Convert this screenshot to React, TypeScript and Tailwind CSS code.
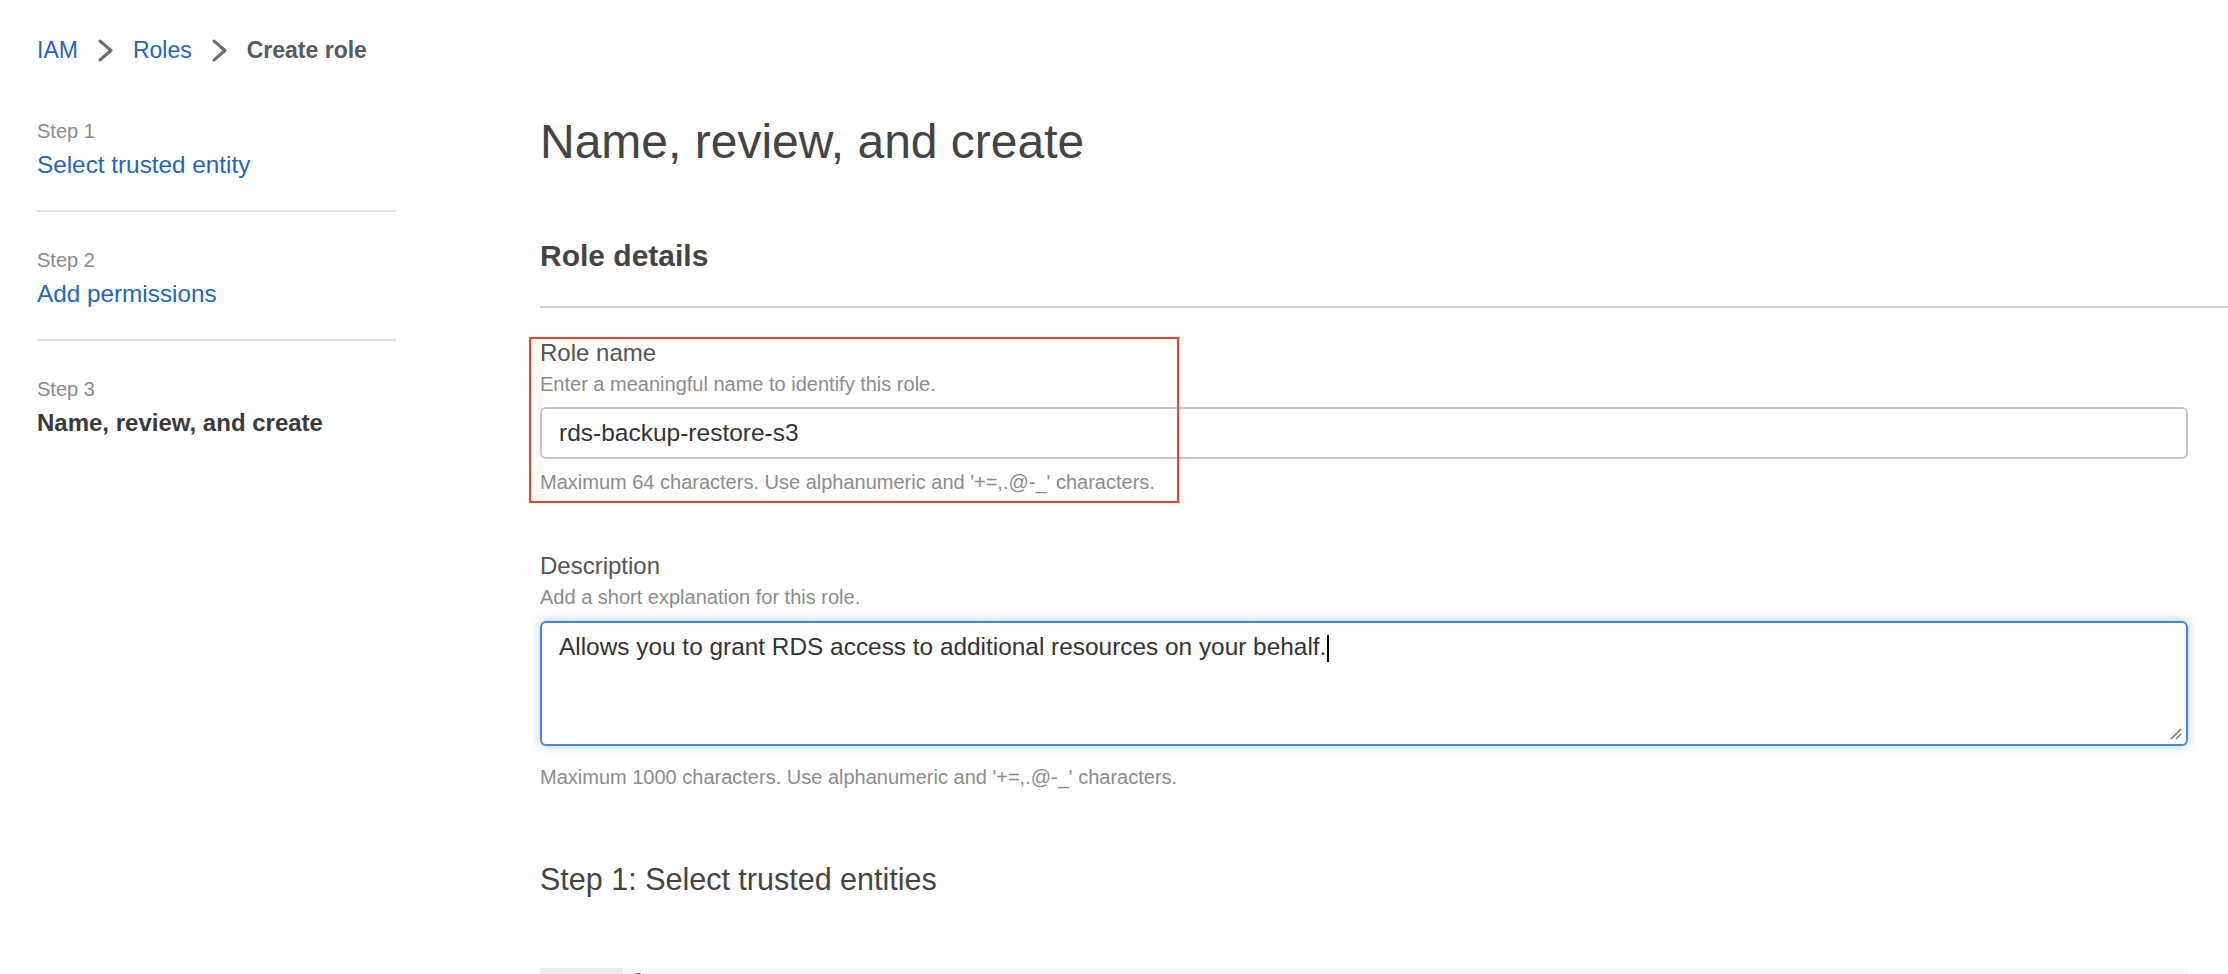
import React from 'react';

const Chevron = () => (
  <svg width="15" height="23" viewBox="0 0 15 23" fill="none" className="shrink-0">
    <polyline points="2,2 13,11.5 2,21" stroke="#687078" strokeWidth="3" strokeLinecap="round" strokeLinejoin="round" />
  </svg>
);

const steps = [
  { label: 'Step 1', title: 'Select trusted entity', current: false },
  { label: 'Step 2', title: 'Add permissions', current: false },
  { label: 'Step 3', title: 'Name, review, and create', current: true },
];

const CreateRolePage = () => {
  return (
    <div className="h-[974px] overflow-hidden bg-white font-['Liberation_Sans',Arial,sans-serif]">
      {/* breadcrumb */}
      <div className="flex items-center gap-[20px] pl-[37px] pt-[38px] text-[23px] leading-[24px]">
        <a className="text-[#2467b8]">IAM</a>
        <Chevron />
        <a className="text-[#2467b8]">Roles</a>
        <Chevron />
        <span className="font-bold text-[#545b64]">Create role</span>
      </div>

      <div className="flex pl-[37px]">
        {/* wizard steps */}
        <nav className="w-[359px] shrink-0 pt-[57px]">
          {steps.map((s, i) => (
            <div key={s.label}>
              {i > 0 && <div className="mt-[31px] mb-[36px] h-[2px] bg-[#e2e2e2]" />}
              <div className="text-[20px] leading-[24px] text-[#8a8a8a]">{s.label}</div>
              <div
                className={
                  s.current
                    ? 'mt-2 text-[24px] leading-[28px] font-bold text-[#3a3a3a]'
                    : 'mt-2 text-[24.3px] leading-[28px] text-[#2467b8]'
                }
              >
                {s.title}
              </div>
            </div>
          ))}
        </nav>

        {/* main */}
        <main className="ml-[144px] flex-1 pt-[51px] pr-[40px]">
          <h1 className="text-[48px] leading-[57px] text-[#444444]">Name, review, and create</h1>
          <h2 className="mt-[68px] text-[30px] leading-[36px] font-bold text-[#444444]">Role details</h2>
          <div className="mt-[32px] -mr-[40px] h-[2px] bg-[#d3d3d3]" />

          {/* role name */}
          <div className="relative mt-[31px]">
            <div className="text-[24px] leading-[28px] text-[#545454]">Role name</div>
            <div className="mt-[5px] text-[20px] leading-[24px] text-[#8c8c8c]">
              Enter a meaningful name to identify this role.
            </div>
            <div className="mt-[11px] flex h-[52px] items-center rounded-[6px] border-2 border-[#c6c6c6] px-[17px] text-[24.5px] leading-[28px] text-[#333333]">
              rds-backup-restore-s3
            </div>
            <div className="mt-[11px] text-[20px] leading-[24px] text-[#8c8c8c]">
              Maximum 64 characters. Use alphanumeric and '+=,.@-_' characters.
            </div>
            <div className="pointer-events-none absolute -left-[11px] -top-[2px] h-[166px] w-[650px] border-2 border-[#e2432b]" />
          </div>

          {/* description */}
          <div className="mt-[58px]">
            <div className="text-[24px] leading-[28px] text-[#545454]">Description</div>
            <div className="mt-[5px] text-[20px] leading-[24px] text-[#8c8c8c]">
              Add a short explanation for this role.
            </div>
            <div className="relative mt-[12px] h-[125px] rounded-[6px] border-2 border-[#4a86d8] px-[17px] pt-[10px] text-[24.4px] leading-[28px] text-[#333333] shadow-[0_0_10px_rgba(74,134,216,0.45)]">
              Allows you to grant RDS access to additional resources on your behalf.
              <span className="ml-[1px] inline-block h-[27px] w-[2px] bg-black align-middle" />
              <svg width="14" height="14" viewBox="0 0 14 14" className="absolute bottom-[3px] right-[3px]">
                <line x1="2" y1="12" x2="12" y2="2" stroke="#777" strokeWidth="1.6" />
                <line x1="7" y1="12" x2="12" y2="7" stroke="#777" strokeWidth="1.6" />
              </svg>
            </div>
            <div className="mt-[19px] text-[20px] leading-[24px] text-[#8c8c8c]">
              Maximum 1000 characters. Use alphanumeric and '+=,.@-_' characters.
            </div>
          </div>

          <h2 className="mt-[72px] text-[30.5px] leading-[36px] text-[#444444]">Step 1: Select trusted entities</h2>

          {/* trust policy editor */}
          <div className="mt-[71px] flex h-[300px]">
            <div className="w-[83px] bg-[#ebebeb]" />
            <div className="flex-1 bg-[#f8f8f8] pl-[6px] pt-[2px] font-['Liberation_Mono',monospace] text-[22px] leading-[28px] text-[#6c6c8c]">
              {'{'}
            </div>
          </div>
        </main>
      </div>
    </div>
  );
};

export default CreateRolePage;
